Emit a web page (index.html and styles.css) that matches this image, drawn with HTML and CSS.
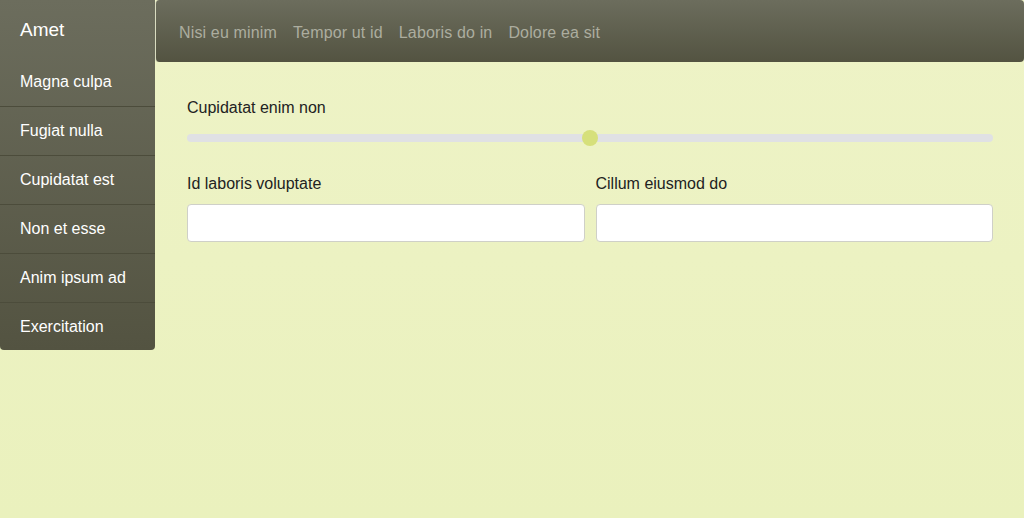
FILE: index.html
```html
<!DOCTYPE html>
<html>
<head>
<meta charset="utf-8">
<link rel="stylesheet" href="styles.css">
</head>
<body>
<div class="app">
  <aside class="sidebar">
    <div class="brand">Amet</div>
    <ul class="menu">
      <li>Magna culpa</li>
      <li>Fugiat nulla</li>
      <li>Cupidatat est</li>
      <li>Non et esse</li>
      <li>Anim ipsum ad</li>
      <li>Exercitation</li>
    </ul>
  </aside>
  <div class="main">
    <nav class="topbar">
      <a>Nisi eu minim</a>
      <a>Tempor ut id</a>
      <a>Laboris do in</a>
      <a>Dolore ea sit</a>
    </nav>
    <div class="content">
      <div class="field">
        <label class="label label-range">Cupidatat enim non</label>
        <div class="range">
          <div class="track"></div>
          <div class="thumb" style="left: 50%"></div>
        </div>
      </div>
      <div class="row">
        <div class="field">
          <label class="label">Id laboris voluptate</label>
          <input class="input" type="text">
        </div>
        <div class="field">
          <label class="label">Cillum eiusmod do</label>
          <input class="input" type="text">
        </div>
      </div>
    </div>
  </div>
</div>
</body>
</html>
```
FILE: styles.css
```css
html, body {
  margin: 0;
  padding: 0;
  height: 100%;
}
body {
  font-family: "Liberation Sans", Arial, sans-serif;
  background: linear-gradient(to bottom, #eef3c7, #eaf1bd);
  color: #222;
}
.app {
  display: flex;
  align-items: flex-start;
  min-height: 518px;
}
.sidebar {
  width: 155px;
  flex: 0 0 155px;
  background: linear-gradient(to bottom, #6c6d5d, #535341);
  border-radius: 0 0 4px 4px;
  color: #fff;
}
.brand {
  height: 58px;
  box-sizing: border-box;
  padding: 20px 20px 0;
  font-size: 19px;
  line-height: 20px;
}
.menu {
  list-style: none;
  margin: 0;
  padding: 0;
}
.menu li {
  height: 48px;
  line-height: 48px;
  padding: 0 20px;
  font-size: 16px;
  border-bottom: 1px solid #4c4c3b;
}
.menu li:last-child {
  border-bottom: none;
  height: 47px;
  line-height: 47px;
}
.main {
  flex: 1;
  display: flex;
  flex-direction: column;
}
.topbar {
  height: 62px;
  box-sizing: border-box;
  background: linear-gradient(to bottom, #6c6d5d, #535341);
  border-radius: 4px;
  display: flex;
  align-items: center;
  padding: 4px 23px 0;
  gap: 16px;
  border-left: 1px solid #d9dcc0;
}
.topbar a {
  color: #acad9f;
  font-size: 16px;
  letter-spacing: 0.15px;
}
.content {
  padding: 36px 31px 0 32px;
  display: flex;
  flex-direction: column;
}
.field {
  display: flex;
  flex-direction: column;
  flex: 1;
}
.label {
  font-size: 16px;
  line-height: 20px;
  color: #222;
  margin-bottom: 10px;
}
.label-range {
  margin-bottom: 12px;
}
.range {
  position: relative;
  height: 16px;
}
.track {
  position: absolute;
  left: 0;
  right: 0;
  top: 4px;
  height: 8px;
  border-radius: 4px;
  background: #e0e1e4;
}
.thumb {
  position: absolute;
  top: 0;
  width: 16px;
  height: 16px;
  margin-left: -8px;
  border-radius: 50%;
  background: #d6e07b;
}
.row {
  display: flex;
  gap: 11px;
  margin-top: 28px;
}
.input {
  height: 38px;
  box-sizing: border-box;
  border: 1px solid #cfd0c8;
  border-radius: 4px;
  background: #fff;
  font: inherit;
  padding: 6px 12px;
}
```
